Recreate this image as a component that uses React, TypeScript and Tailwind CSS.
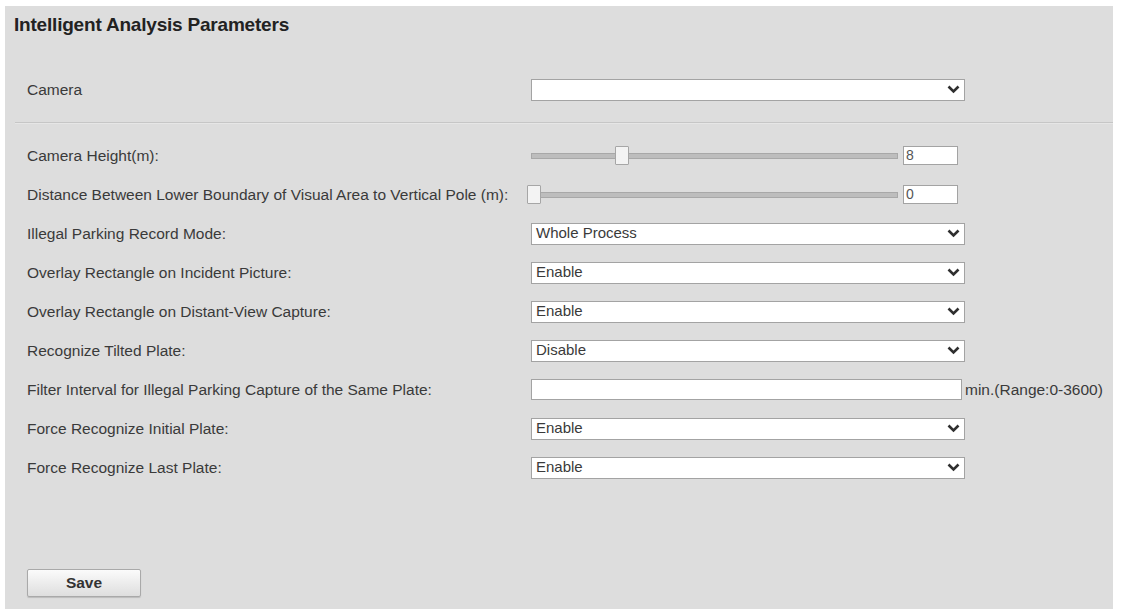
import React from "react";

const font = { fontFamily: '"Liberation Sans", Arial, sans-serif' };

function Chevron() {
  return (
    <svg width="13" height="9" viewBox="0 0 13 9" className="shrink-0">
      <path d="M1.5 1.5 L6.5 6.5 L11.5 1.5" fill="none" stroke="#2f2f2f" strokeWidth="2.6" />
    </svg>
  );
}

function Select({ value }: { value: string }) {
  return (
    <div className="w-[434px] h-[22px] bg-white border border-[#a3a3a3] flex items-center justify-between pl-[4px] pr-[4px] text-[15px] text-[#3a3a3a]">
      <span>{value}</span>
      <Chevron />
    </div>
  );
}

function Slider({ value, max }: { value: number; max: number }) {
  return (
    <div className="flex items-center">
      <div className="relative w-[367px] h-[6px] bg-[#bdbdbd] border border-[#a8a8a8]">
        <div
          className="absolute top-[-8px] w-[14px] h-[19px] -ml-[5px] bg-[#f3f3f3] border border-[#a6a6a6] rounded-[1px]"
          style={{ left: `${(value / max) * 100}%` }}
        />
      </div>
      <div className="ml-[5px] w-[55px] h-[19px] bg-white border border-[#a3a3a3] flex items-center pl-[2px] text-[14px] text-[#555]">
        {value}
      </div>
    </div>
  );
}

function Row({ label, children }: { label: string; children: React.ReactNode }) {
  return (
    <div className="h-[39px] flex items-center">
      <div className="w-[526px] shrink-0 pl-[22px] text-[15.5px] text-[#3a3a3a] whitespace-nowrap">{label}</div>
      {children}
    </div>
  );
}

export default function App() {
  return (
    <div className="w-[1121px] h-[609px] bg-white pl-[5px] pt-[6px] overflow-hidden" style={font}>
      <div className="w-[1108px] h-[603px] bg-[#dddddd]">
        <div className="h-[38px] flex items-center pl-[9px] text-[19px] font-bold text-[#222] tracking-[-0.2px]">
          Intelligent Analysis Parameters
        </div>

        <div className="mt-[26px]">
          <Row label="Camera">
            <Select value="" />
          </Row>
        </div>

        <div className="mt-[13px] ml-[10px] h-[2px] border-t border-[#c6c6c6] bg-[#e6e6e6]" />

        <div className="mt-[12px]">
          <Row label="Camera Height(m):">
            <Slider value={8} max={33} />
          </Row>
          <Row label="Distance Between Lower Boundary of Visual Area to Vertical Pole (m):">
            <Slider value={0} max={33} />
          </Row>
          <Row label="Illegal Parking Record Mode:">
            <Select value="Whole Process" />
          </Row>
          <Row label="Overlay Rectangle on Incident Picture:">
            <Select value="Enable" />
          </Row>
          <Row label="Overlay Rectangle on Distant-View Capture:">
            <Select value="Enable" />
          </Row>
          <Row label="Recognize Tilted Plate:">
            <Select value="Disable" />
          </Row>
          <Row label="Filter Interval for Illegal Parking Capture of the Same Plate:">
            <div className="flex items-center">
              <div className="w-[431px] h-[21px] bg-white border border-[#a3a3a3]" />
              <span className="ml-[3px] text-[15.5px] text-[#3a3a3a] whitespace-nowrap">min.(Range:0-3600)</span>
            </div>
          </Row>
          <Row label="Force Recognize Initial Plate:">
            <Select value="Enable" />
          </Row>
          <Row label="Force Recognize Last Plate:">
            <Select value="Enable" />
          </Row>
        </div>

        <div className="mt-[82px] pl-[22px]">
          <button className="w-[114px] h-[28px] border border-[#a9a9a9] rounded-[2px] bg-gradient-to-b from-[#fbfbfb] to-[#dedede] text-[15.5px] font-bold text-[#333] shadow-[0_1px_1px_rgba(0,0,0,0.15)]">
            Save
          </button>
        </div>
      </div>
    </div>
  );
}
